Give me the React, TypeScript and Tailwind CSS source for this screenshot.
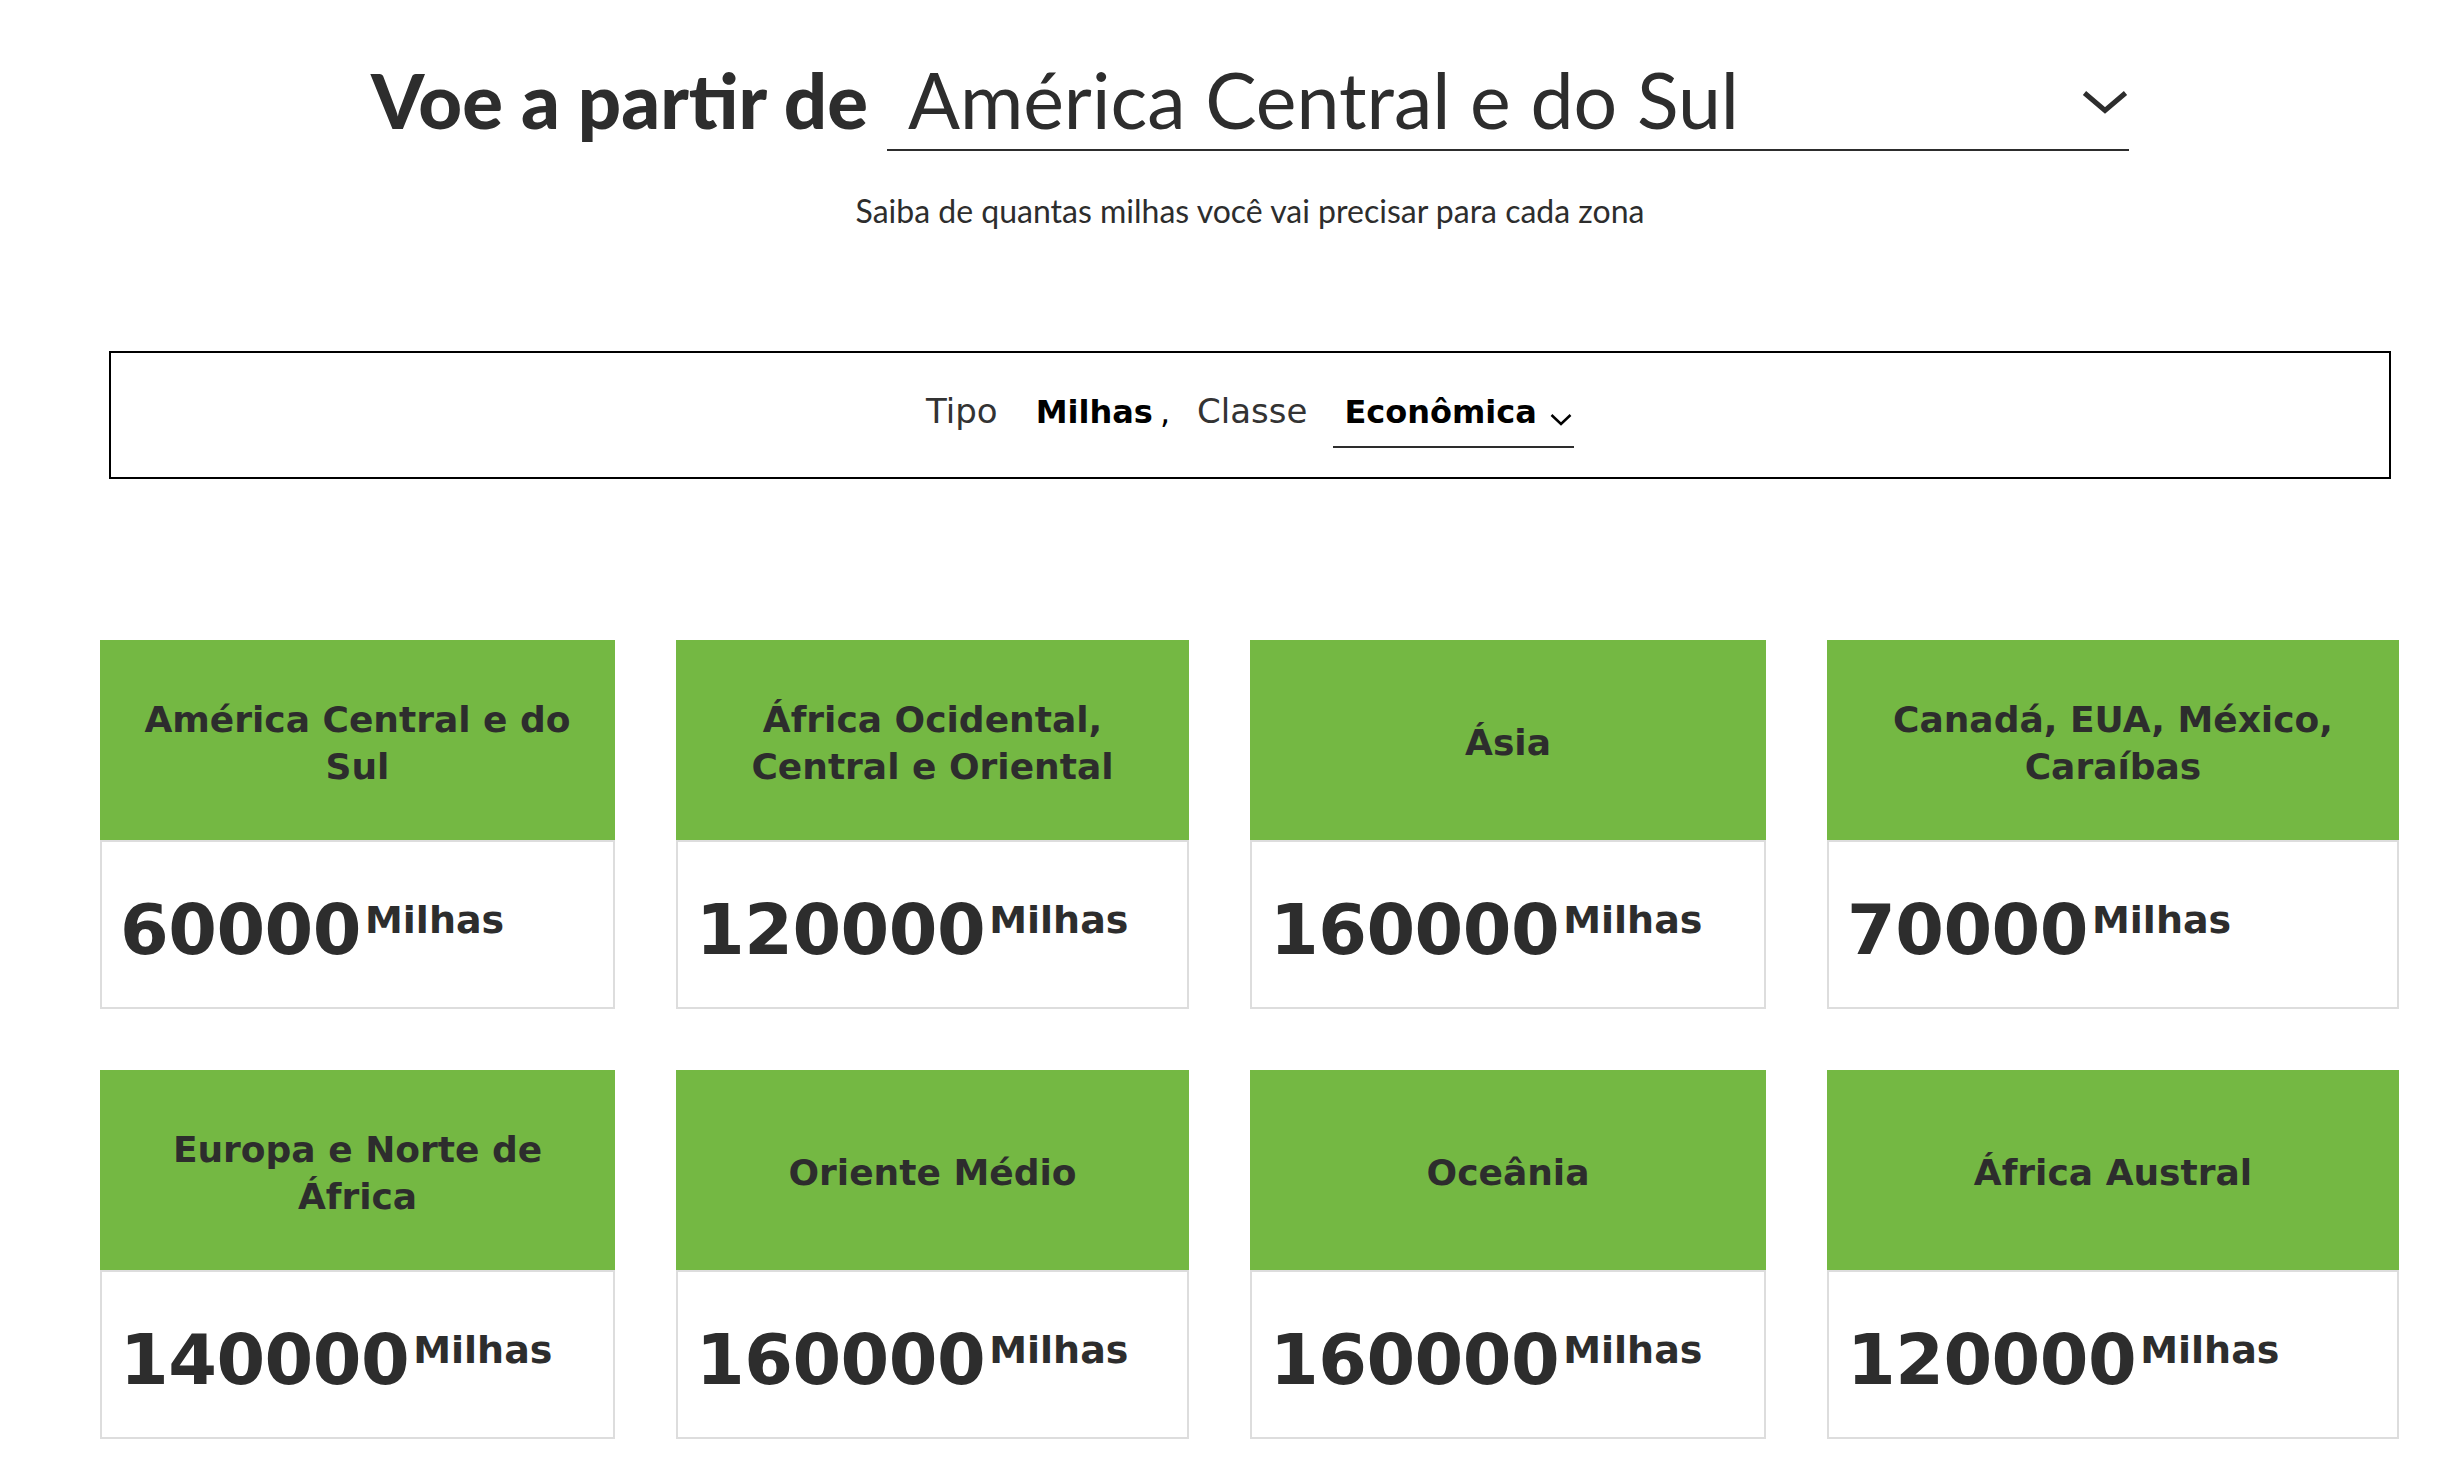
interface Zone {
  name: string;
  miles: number;
}

const zones: Zone[] = [
  { name: 'América Central e do Sul', miles: 60000 },
  { name: 'África Ocidental, Central e Oriental', miles: 120000 },
  { name: 'Ásia', miles: 160000 },
  { name: 'Canadá, EUA, México, Caraíbas', miles: 70000 },
  { name: 'Europa e Norte de África', miles: 140000 },
  { name: 'Oriente Médio', miles: 160000 },
  { name: 'Oceânia', miles: 160000 },
  { name: 'África Austral', miles: 120000 },
];

function ZoneCard({ zone }: { zone: Zone }) {
  return (
    <div className="flex flex-col font-['DejaVu_Sans',sans-serif] text-[#2d2d2d]">
      <div className="h-[200px] bg-[#74b843] flex items-center justify-center text-center px-[40px] pt-[5px]">
        <h3 className="font-bold text-[36px] leading-[47px]">{zone.name}</h3>
      </div>
      <div className="h-[169px] border-2 border-[#dddddd] flex items-start pl-[18px] pt-[53px]">
        <span className="text-[70px] leading-none font-bold tracking-[-0.5px]">{zone.miles}</span>
        <span className="text-[38px] leading-none font-bold mt-[6px] ml-[4px]">Milhas</span>
      </div>
    </div>
  );
}

export default function App() {
  return (
    <div className="min-h-screen bg-white text-[#2d2d2d] font-['Lato',sans-serif]">
      <div className="ml-[100px] w-[2300px] pb-[30px]">
        {/* cabeçalho */}
        <div className="flex justify-center items-baseline pt-[57px]">
          <h1 className="text-[76px] leading-[84px] font-black">Voe a partir de</h1>
          <button className="ml-[19px] w-[1242px] flex justify-between pl-[21px] pr-[1px] pb-[8px] border-b-2 border-[#2d2d2d] text-left">
            <span className="text-[77px] leading-[84px] font-normal">América Central e do Sul</span>
            <svg width="46" height="24" viewBox="0 0 46 24" fill="none" className="self-start mt-[33px]">
              <polyline points="2.5,3 23,20.5 43.5,3" stroke="#2d2d2d" strokeWidth="5" />
            </svg>
          </button>
        </div>
        <p className="mt-[41px] text-center text-[32px] leading-[38px]">
          Saiba de quantas milhas você vai precisar para cada zona
        </p>

        {/* filtros */}
        <div className="mt-[121px] mx-[9px] h-[128px] border-2 border-black flex justify-center items-baseline pt-[38px] font-['DejaVu_Sans',sans-serif]">
          <span className="text-[34px] leading-[40px] text-[#333]">Tipo</span>
          <span className="ml-[38px] text-[32px] leading-[40px] font-bold text-black">Milhas</span>
          <span className="ml-[7px] text-[32px] leading-[40px] text-black">,</span>
          <span className="ml-[27px] text-[34px] leading-[40px] text-[#333]">Classe</span>
          <button className="ml-[26px] flex items-baseline pl-[11px] pr-[2px] pb-[14px] border-b-2 border-[#2d2d2d]">
            <span className="text-[32px] leading-[40px] font-bold text-black">Econômica</span>
            <svg width="22" height="13" viewBox="0 0 22 13" fill="none" className="ml-[13px] self-end mb-[6px]">
              <polyline points="1.5,2 11,11 20.5,2" stroke="#000" strokeWidth="2.5" />
            </svg>
          </button>
        </div>

        {/* zonas */}
        <div className="mt-[161px] grid grid-cols-[515px_513px_516px_572px] gap-x-[61px] gap-y-[61px]">
          {zones.map((z) => (
            <ZoneCard key={z.name} zone={z} />
          ))}
        </div>
      </div>
    </div>
  );
}
